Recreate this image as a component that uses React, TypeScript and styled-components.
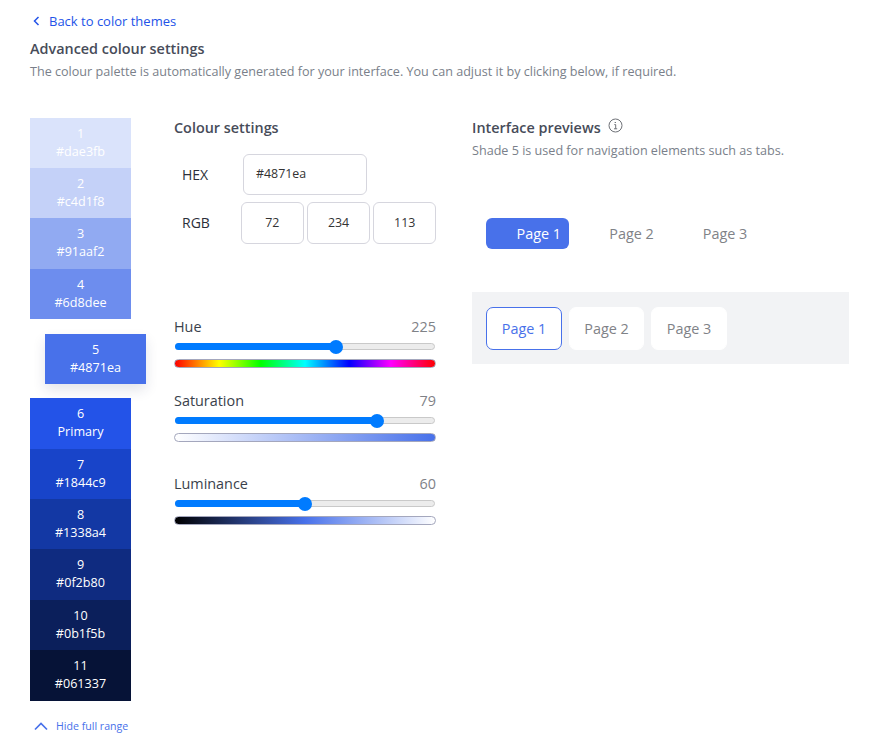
import React from "react";
import styled, { createGlobalStyle } from "styled-components";

const Global = createGlobalStyle`
  html, body { margin: 0; padding: 0; background: #fff; }
  body { font-family: "Open Sans", "Noto Sans", sans-serif; color: #2b2f3a; }
  * { box-sizing: border-box; }
`;

const Page = styled.div`
  width: 870px;
  height: 751px;
  padding: 11px 21px 0 30px;
  overflow: hidden;
`;
const BackLink = styled.a`
  display: flex;
  align-items: center;
  gap: 9px;
  height: 19px;
  padding-left: 3px;
  font-size: 13px;
  color: #2353e8;
`;
const Title = styled.h1`
  margin: 9px 0 0;
  font-size: 14.4px;
  line-height: 19px;
  font-weight: 600;
  color: #474c59;
`;
const Description = styled.p`
  margin: 5px 0 0;
  font-size: 12.6px;
  line-height: 18px;
  color: #7a7f8a;
`;
const Columns = styled.div`
  display: grid;
  grid-template-columns: 144px 298px 377px;
  margin-top: 37px;
`;
const Palette = styled.div`
  display: flex;
  flex-direction: column;
`;
const Swatch = styled.div<{ $bg: string; $active?: boolean; $h: number }>`
  width: 101px;
  height: ${(p) => p.$h}px;
  padding-bottom: 1px;
  background: ${(p) => p.$bg};
  color: #fff;
  font-size: 12.6px;
  line-height: 18px;
  text-align: center;
  display: flex;
  flex-direction: column;
  justify-content: center;
  margin-left: ${(p) => (p.$active ? "15px" : "0")};
  margin-top: ${(p) => (p.$active ? "15px" : "0")};
  margin-bottom: ${(p) => (p.$active ? "14px" : "0")};
  box-shadow: ${(p) => (p.$active ? "0 6px 12px rgba(30,40,80,.12)" : "none")};
`;
const RangeToggle = styled.a`
  display: flex;
  align-items: center;
  gap: 8px;
  margin-top: 17px;
  padding-left: 4px;
  height: 16px;
  font-size: 10.6px;
  color: #4871ea;
`;
const Settings = styled.section`
  width: 262px;
  display: flex;
  flex-direction: column;
`;
const SectionTitle = styled.h2`
  margin: 0;
  font-size: 14.4px;
  line-height: 20px;
  font-weight: 600;
  color: #474c59;
`;
const FieldRow = styled.div<{ $mt: number }>`
  display: flex;
  align-items: center;
  margin-top: ${(p) => p.$mt}px;
`;
const FieldLabel = styled.span`
  flex: 0 0 67px;
  padding: 0 0 1px 8px;
  font-size: 14px;
  color: #2b2f3a;
`;
const HexBox = styled.div`
  width: 124px;
  height: 41px;
  margin-left: 2px;
  padding: 0 12px 3px;
  display: flex;
  align-items: center;
  border: 1px solid #d6d6de;
  border-radius: 6px;
  font-size: 12.4px;
  color: #333;
`;
const RgbGroup = styled.div`
  flex: 1;
  display: flex;
  gap: 3.5px;
`;
const RgbBox = styled.div`
  flex: 1;
  height: 42px;
  padding-bottom: 1px;
  display: flex;
  align-items: center;
  justify-content: center;
  border: 1px solid #d6d6de;
  border-radius: 6px;
  font-size: 12.4px;
  color: #333;
`;
const Slider = styled.div<{ $mt: number }>`
  margin-top: ${(p) => p.$mt}px;
`;
const SliderHead = styled.div`
  display: flex;
  justify-content: space-between;
  font-size: 14.4px;
  line-height: 20px;
  color: #3a3f4b;
`;
const SliderValue = styled.span`
  font-size: 14.4px;
  color: #7f8287;
`;
const Track = styled.div`
  position: relative;
  height: 7px;
  margin: 6px 1px 0;
  background: #ececec;
  border: 1px solid #c9c9c9;
  border-radius: 4px;
`;
const Fill = styled.div`
  position: absolute;
  left: -1px;
  top: -1px;
  height: 7px;
  background: #007bff;
  border-radius: 4px;
`;
const Thumb = styled.div`
  position: absolute;
  top: -4px;
  width: 14px;
  height: 14px;
  margin-left: -7px;
  background: #007bff;
  border-radius: 50%;
`;
const GradientBar = styled.div<{ $bg: string }>`
  height: 9px;
  margin-top: 9px;
  border: 1px solid #a4a7bd;
  border-radius: 5px;
  background: ${(p) => p.$bg};
`;
const Preview = styled.section`
  display: flex;
  flex-direction: column;
`;
const PreviewHead = styled.div`
  display: flex;
  align-items: flex-start;
  gap: 7px;
`;
const PreviewNote = styled.p`
  margin: 4px 0 0;
  font-size: 12.6px;
  line-height: 18px;
  color: #7a7f8a;
`;
const PillTabs = styled.div`
  display: flex;
  margin: 58px 0 0 14px;
  height: 31px;
`;
const Pill = styled.div<{ $active?: boolean; $w: number }>`
  width: ${(p) => p.$w}px;
  height: 31px;
  display: flex;
  align-items: center;
  justify-content: ${(p) => (p.$active ? "flex-end" : "center")};
  padding-right: ${(p) => (p.$active ? "8px" : "0")};
  border-radius: 6px;
  background: ${(p) => (p.$active ? "#4871ea" : "transparent")};
  color: ${(p) => (p.$active ? "#fff" : "#7f8287")};
  font-size: 14.4px;
`;
const CardTabs = styled.div`
  display: flex;
  gap: 7px;
  margin-top: 43px;
  height: 72px;
  padding: 15px 14px;
  background: #f2f3f5;
`;
const CardTab = styled.div<{ $active?: boolean; $w: number }>`
  width: ${(p) => p.$w}px;
  height: 43px;
  display: flex;
  align-items: center;
  justify-content: center;
  background: #fff;
  border-radius: 7px;
  border: 1px solid ${(p) => (p.$active ? "#4871ea" : "#fff")};
  color: ${(p) => (p.$active ? "#4871ea" : "#7f8287")};
  font-size: 14.4px;
`;

const shades = [
  { n: "1", t: "#dae3fb", bg: "#dae3fb", h: 50 },
  { n: "2", t: "#c4d1f8", bg: "#c4d1f8", h: 50 },
  { n: "3", t: "#91aaf2", bg: "#91aaf2", h: 51 },
  { n: "4", t: "#6d8dee", bg: "#6d8dee", h: 50 },
  { n: "5", t: "#4871ea", bg: "#4871ea", h: 50, active: true },
  { n: "6", t: "Primary", bg: "#2353e8", h: 51 },
  { n: "7", t: "#1844c9", bg: "#1844c9", h: 50 },
  { n: "8", t: "#1338a4", bg: "#1338a4", h: 50 },
  { n: "9", t: "#0f2b80", bg: "#0f2b80", h: 51 },
  { n: "10", t: "#0b1f5b", bg: "#0b1f5b", h: 50 },
  { n: "11", t: "#061337", bg: "#061337", h: 51 },
];

const sliders = [
  {
    name: "Hue",
    value: 225,
    pct: 62,
    mt: 73,
    bg: "linear-gradient(90deg,#f00 0%,#ff0 17%,#0f0 33%,#0ff 50%,#00f 67%,#f0f 83%,#f00 100%)",
  },
  {
    name: "Saturation",
    value: 79,
    pct: 78,
    mt: 23,
    bg: "linear-gradient(90deg,#fff 0%,#4871ea 100%)",
  },
  {
    name: "Luminance",
    value: 60,
    pct: 50,
    mt: 32,
    bg: "linear-gradient(90deg,#000 0%,#4871ea 50%,#fff 100%)",
  },
];

export default function App() {
  return (
    <Page>
      <Global />
      <BackLink>
        <svg width="7" height="10" viewBox="0 0 7 10" fill="none" stroke="#2353e8" strokeWidth="1.5">
          <path d="M5.5 1 L1.5 5 L5.5 9" />
        </svg>
        Back to color themes
      </BackLink>
      <Title>Advanced colour settings</Title>
      <Description>
        The colour palette is automatically generated for your interface. You can adjust it by clicking below, if required.
      </Description>
      <Columns>
        <Palette>
          {shades.map((s) => (
            <Swatch key={s.n} $bg={s.bg} $h={s.h} $active={s.active}>
              <span>{s.n}</span>
              <span>{s.t}</span>
            </Swatch>
          ))}
          <RangeToggle>
            <svg width="14" height="9" viewBox="0 0 14 9" fill="none" stroke="#4871ea" strokeWidth="1.7">
              <path d="M1 7.5 L7 1.5 L13 7.5" />
            </svg>
            Hide full range
          </RangeToggle>
        </Palette>
        <Settings>
          <SectionTitle>Colour settings</SectionTitle>
          <FieldRow $mt={16}>
            <FieldLabel>HEX</FieldLabel>
            <HexBox>#4871ea</HexBox>
          </FieldRow>
          <FieldRow $mt={7}>
            <FieldLabel>RGB</FieldLabel>
            <RgbGroup>
              <RgbBox>72</RgbBox>
              <RgbBox>234</RgbBox>
              <RgbBox>113</RgbBox>
            </RgbGroup>
          </FieldRow>
          {sliders.map((s) => (
            <Slider key={s.name} $mt={s.mt}>
              <SliderHead>
                <span>{s.name}</span>
                <SliderValue>{s.value}</SliderValue>
              </SliderHead>
              <Track>
                <Fill style={{ width: `${s.pct}%` }} />
                <Thumb style={{ left: `${s.pct}%` }} />
              </Track>
              <GradientBar $bg={s.bg} />
            </Slider>
          ))}
        </Settings>
        <Preview>
          <PreviewHead>
            <SectionTitle>Interface previews</SectionTitle>
            <svg width="15" height="15" viewBox="0 0 15 15" fill="none" stroke="#6f7278" strokeWidth="1">
              <circle cx="7.5" cy="7.5" r="6.5" />
              <path d="M6.3 6.6 H7.7 V10.8 M6 10.8 H9.2" />
              <path d="M7.3 4 V5" strokeWidth="1.3" />
            </svg>
          </PreviewHead>
          <PreviewNote>Shade 5 is used for navigation elements such as tabs.</PreviewNote>
          <PillTabs>
            <Pill $active $w={83}>Page 1</Pill>
            <Pill $w={125}>Page 2</Pill>
            <Pill $w={62}>Page 3</Pill>
          </PillTabs>
          <CardTabs>
            <CardTab $active $w={76}>Page 1</CardTab>
            <CardTab $w={75}>Page 2</CardTab>
            <CardTab $w={76}>Page 3</CardTab>
          </CardTabs>
        </Preview>
      </Columns>
    </Page>
  );
}
